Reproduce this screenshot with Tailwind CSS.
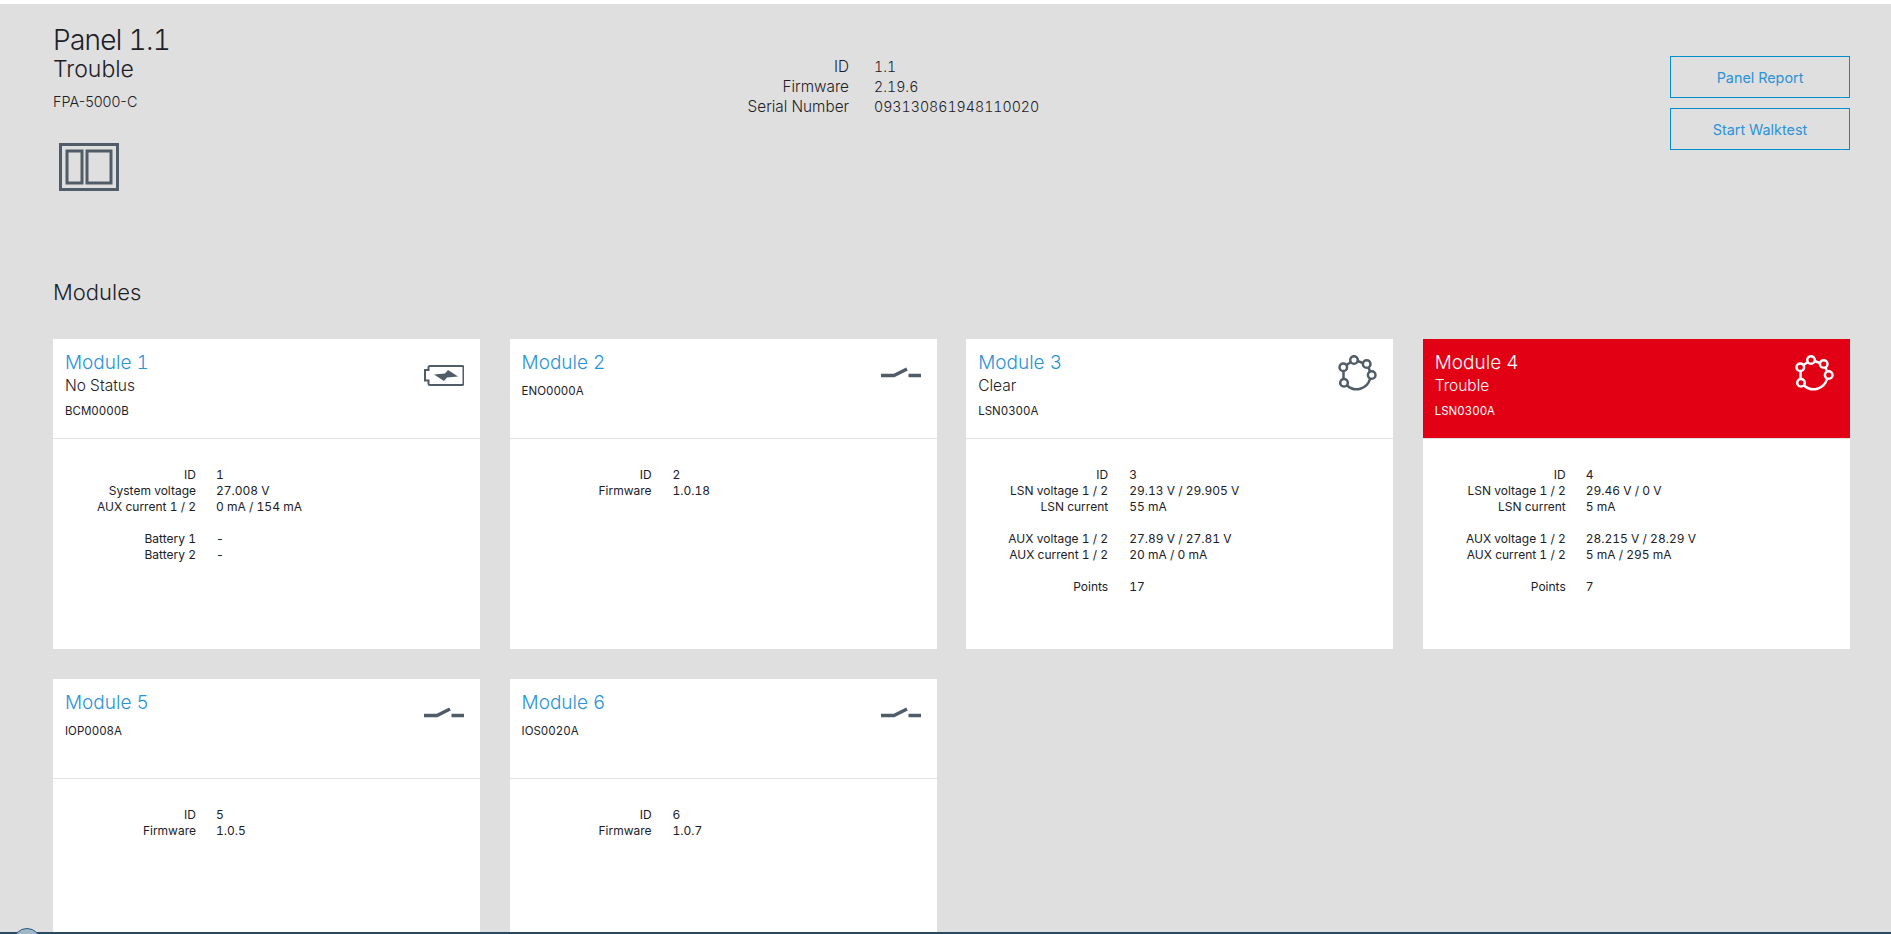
<!doctype html>
<html><head><meta charset="utf-8"><script src="https://cdn.jsdelivr.net/npm/@tailwindcss/browser@4"></script></head>
<body class="m-0">
<div class="relative h-[934px] w-[1891px] overflow-hidden bg-[#dfdfdf] font-['Inter',sans-serif] tabular-nums text-[#1d2127] border-t-[4px] border-white">
  <header class="flex h-[274px] pl-[53px] pr-[41px]">
    <div class="w-[640px]">
      <h1 class="mt-[20px] text-[28px] leading-[32px] font-light tracking-[-0.7px]">Panel 1.1</h1>
      <p class="text-[23px] leading-[27px] font-light">Trouble</p>
      <p class="mt-[9px] text-[14.4px] leading-[20px] font-light normal-nums">FPA-5000-C</p>
      <svg class="mt-[31px] ml-[6px]" width="60" height="48" viewBox="0 0 60 48" fill="none" stroke="#505c68"><rect x="1.5" y="1.5" width="57" height="45" stroke-width="3"/><rect x="8" y="8" width="15" height="32" stroke-width="3"/><rect x="28" y="8" width="24" height="32" stroke-width="3"/></svg>
    </div>
    <dl class="mt-[53px] grid grid-cols-[156px_auto] content-start gap-x-[25px] text-[15.3px] leading-[20px] font-light">
      <dt class="text-right">ID</dt><dd class="text-[14.2px]">1.1</dd>
      <dt class="text-right">Firmware</dt><dd class="text-[14.2px]">2.19.6</dd>
      <dt class="text-right">Serial Number</dt><dd class="text-[14.2px]">093130861948110020</dd>
    </dl>
    <div class="ml-auto mt-[52px] flex w-[180px] flex-col gap-[10px]">
      <button class="h-[42px] border border-[#008ecf] pt-[1px] text-[14.4px] text-[#2b93d6]">Panel Report</button>
      <button class="h-[42px] border border-[#008ecf] pt-[1px] text-[14.4px] text-[#2b93d6]">Start Walktest</button>
    </div>
  </header>
  <h2 class="pl-[53px] text-[22px] leading-[28px] font-light">Modules</h2>
  <main class="mt-[33px] grid grid-cols-4 gap-x-[29.3px] gap-y-[30px] pl-[53px] pr-[41px]">

    <article class="h-[310px] bg-white">
      <div class="flex h-[99px] justify-between pl-[12px] pr-[16px] pt-[11px]">
        <div><h3 class="text-[19px] leading-[26px] font-light text-[#2b93d6]">Module 1</h3><p class="text-[15.5px] leading-[20px] font-light">No Status</p><p class="mt-[7px] text-[11.5px] leading-[16px]">BCM0000B</p></div>
        <svg class="mt-[15px]" width="40" height="21" viewBox="0 0 40 21" fill="none"><path d="M4.500 5V2.500Q4.500 1 6 1H38Q39.500 1 39.500 2.500V18.500Q39.500 20 38 20H6Q4.500 20 4.500 18.500V15.500H1V5Z" stroke="#505c68" stroke-width="2"/><path d="M10 9.500L21 8.500L24 5L34 11.500L23 12.500L20 16Z" fill="#505c68"/></svg>
      </div>
      <div class="border-t border-[#e3e3e3] pt-[28px]">
        <dl class="grid grid-cols-[143px_auto] gap-x-[20px] text-[12px] leading-[16px]">
          <dt class="text-right">ID</dt><dd>1</dd>
          <dt class="text-right">System voltage</dt><dd>27.008 V</dd>
          <dt class="text-right">AUX current 1 / 2</dt><dd>0 mA / 154 mA</dd>
          <dt class="mt-[16px] text-right">Battery 1</dt><dd class="mt-[16px]">-</dd>
          <dt class="text-right">Battery 2</dt><dd>-</dd>
        </dl>
      </div>
    </article>

    <article class="h-[310px] bg-white">
      <div class="flex h-[99px] justify-between pl-[12px] pr-[16px] pt-[11px]">
        <div><h3 class="text-[19px] leading-[26px] font-light text-[#2b93d6]">Module 2</h3><p class="mt-[7px] text-[11.5px] leading-[16px]">ENO0000A</p></div>
        <svg class="mt-[16px]" width="40" height="12" viewBox="0 0 40 12" fill="none" stroke="#505c68" stroke-width="3.500"><path d="M0 9.500H13L26 3M27.500 9.500H40"/></svg>
      </div>
      <div class="border-t border-[#e3e3e3] pt-[28px]">
        <dl class="grid grid-cols-[142px_auto] gap-x-[21px] text-[12px] leading-[16px]">
          <dt class="text-right">ID</dt><dd>2</dd>
          <dt class="text-right">Firmware</dt><dd>1.0.18</dd>
        </dl>
      </div>
    </article>

    <article class="h-[310px] bg-white">
      <div class="flex h-[99px] justify-between pl-[12px] pr-[15px] pt-[11px]">
        <div><h3 class="text-[19px] leading-[26px] font-light text-[#2b93d6]">Module 3</h3><p class="text-[15.5px] leading-[20px] font-light">Clear</p><p class="mt-[7px] text-[11.5px] leading-[16px]">LSN0300A</p></div>
        <svg class="mt-[5px]" width="40" height="40" viewBox="0 0 40 40" fill="none" stroke="#505c68" stroke-width="2.500"><path d="M5.500 16V24M8.500 10L13 7M19.500 6L25 8M30.500 12.500L32 16.500M32 24A14 14 0 0 1 9 30.500"/><circle cx="5.300" cy="12.300" r="3.800"/><circle cx="16" cy="5" r="3.800"/><circle cx="28.700" cy="9" r="3.800"/><circle cx="33.700" cy="20" r="3.800"/><circle cx="6" cy="27.700" r="3.800"/></svg>
      </div>
      <div class="border-t border-[#e3e3e3] pt-[28px]">
        <dl class="grid grid-cols-[142px_auto] gap-x-[21px] text-[12px] leading-[16px]">
          <dt class="text-right">ID</dt><dd>3</dd>
          <dt class="text-right">LSN voltage 1 / 2</dt><dd>29.13 V / 29.905 V</dd>
          <dt class="text-right">LSN current</dt><dd>55 mA</dd>
          <dt class="mt-[16px] text-right">AUX voltage 1 / 2</dt><dd class="mt-[16px]">27.89 V / 27.81 V</dd>
          <dt class="text-right">AUX current 1 / 2</dt><dd>20 mA / 0 mA</dd>
          <dt class="mt-[16px] text-right">Points</dt><dd class="mt-[16px]">17</dd>
        </dl>
      </div>
    </article>

    <article class="h-[310px] bg-white">
      <div class="flex h-[99px] justify-between bg-[#e20015] pl-[12px] pr-[15px] pt-[11px] text-white">
        <div><h3 class="text-[19px] leading-[26px] font-light">Module 4</h3><p class="text-[15.5px] leading-[20px] font-light">Trouble</p><p class="mt-[7px] text-[11.5px] leading-[16px]">LSN0300A</p></div>
        <svg class="mt-[5px]" width="40" height="40" viewBox="0 0 40 40" fill="none" stroke="#fff" stroke-width="2.500"><path d="M5.500 16V24M8.500 10L13 7M19.500 6L25 8M30.500 12.500L32 16.500M32 24A14 14 0 0 1 9 30.500"/><circle cx="5.300" cy="12.300" r="3.800"/><circle cx="16" cy="5" r="3.800"/><circle cx="28.700" cy="9" r="3.800"/><circle cx="33.700" cy="20" r="3.800"/><circle cx="6" cy="27.700" r="3.800"/></svg>
      </div>
      <div class="border-t border-[#e3e3e3] pt-[28px]">
        <dl class="grid grid-cols-[143px_auto] gap-x-[20px] text-[12px] leading-[16px]">
          <dt class="text-right">ID</dt><dd>4</dd>
          <dt class="text-right">LSN voltage 1 / 2</dt><dd>29.46 V / 0 V</dd>
          <dt class="text-right">LSN current</dt><dd>5 mA</dd>
          <dt class="mt-[16px] text-right">AUX voltage 1 / 2</dt><dd class="mt-[16px]">28.215 V / 28.29 V</dd>
          <dt class="text-right">AUX current 1 / 2</dt><dd>5 mA / 295 mA</dd>
          <dt class="mt-[16px] text-right">Points</dt><dd class="mt-[16px]">7</dd>
        </dl>
      </div>
    </article>

    <article class="h-[310px] bg-white">
      <div class="flex h-[99px] justify-between pl-[12px] pr-[16px] pt-[11px]">
        <div><h3 class="text-[19px] leading-[26px] font-light text-[#2b93d6]">Module 5</h3><p class="mt-[7px] text-[11.5px] leading-[16px]">IOP0008A</p></div>
        <svg class="mt-[16px]" width="40" height="12" viewBox="0 0 40 12" fill="none" stroke="#505c68" stroke-width="3.500"><path d="M0 9.500H13L26 3M27.500 9.500H40"/></svg>
      </div>
      <div class="border-t border-[#e3e3e3] pt-[28px]">
        <dl class="grid grid-cols-[143px_auto] gap-x-[20px] text-[12px] leading-[16px]">
          <dt class="text-right">ID</dt><dd>5</dd>
          <dt class="text-right">Firmware</dt><dd>1.0.5</dd>
        </dl>
      </div>
    </article>

    <article class="h-[310px] bg-white">
      <div class="flex h-[99px] justify-between pl-[12px] pr-[16px] pt-[11px]">
        <div><h3 class="text-[19px] leading-[26px] font-light text-[#2b93d6]">Module 6</h3><p class="mt-[7px] text-[11.5px] leading-[16px]">IOS0020A</p></div>
        <svg class="mt-[16px]" width="40" height="12" viewBox="0 0 40 12" fill="none" stroke="#505c68" stroke-width="3.500"><path d="M0 9.500H13L26 3M27.500 9.500H40"/></svg>
      </div>
      <div class="border-t border-[#e3e3e3] pt-[28px]">
        <dl class="grid grid-cols-[142px_auto] gap-x-[21px] text-[12px] leading-[16px]">
          <dt class="text-right">ID</dt><dd>6</dd>
          <dt class="text-right">Firmware</dt><dd>1.0.7</dd>
        </dl>
      </div>
    </article>
  </main>
  <div class="absolute bottom-0 left-0 right-0 h-[2px] bg-[#2a4a62]"></div>
  <div class="absolute bottom-[-22px] left-[13px] h-[28px] w-[28px] rounded-full border border-[#2a5a80] bg-[#9fb8c8]"></div>
</div>
</body></html>
